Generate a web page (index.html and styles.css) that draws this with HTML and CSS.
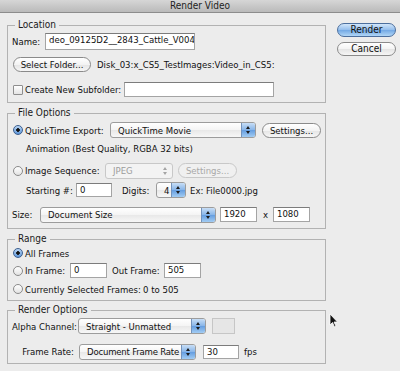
FILE: index.html
```html
<!DOCTYPE html>
<html lang="en">
  <head>
    <meta charset="UTF-8" />
    <meta name="viewport" content="width=device-width, initial-scale=1.0" />
    <title>Render Video</title>
    <link rel="stylesheet" href="styles.css">
  </head>
  <body>
    <div class="titlebar">Render Video</div>
    <div class="dialog">
      <div class="main">
        <fieldset class="group location">
          <legend>Location</legend>
          <div class="row row-name">
            <span class="lbl name-lbl">Name:</span>
            <div class="text name-input">deo_09125D2__2843_Cattle_V004<i class="caret"></i></div>
          </div>
          <div class="row row-folder">
            <div class="btn folder-btn">Select Folder...</div>
            <span class="path">Disk_03:x_CS5_TestImages:Video_in_CS5:</span>
          </div>
          <div class="row row-sub">
            <span class="check"></span>
            <span class="lbl sub-lbl">Create New Subfolder:</span>
            <div class="text sub-input"></div>
          </div>
        </fieldset>

        <fieldset class="group file-options">
          <legend>File Options</legend>
          <div class="row row-qt">
            <span class="radio on"></span>
            <span class="lbl qt-lbl">QuickTime Export:</span>
            <div class="popup qt-popup"><span>QuickTime Movie</span><i class="arrows"></i></div>
            <div class="btn settings-btn">Settings...</div>
          </div>
          <div class="row row-anim">
            <span class="lbl">Animation (Best Quality, RGBA 32 bits)</span>
          </div>
          <div class="row row-seq">
            <span class="radio"></span>
            <span class="lbl seq-lbl">Image Sequence:</span>
            <div class="popup disabled jpeg-popup"><span>JPEG</span><i class="arrows"></i></div>
            <div class="btn disabled seq-settings">Settings...</div>
          </div>
          <div class="row row-start">
            <span class="lbl start-lbl">Starting #:</span>
            <div class="text start-input">0</div>
            <span class="lbl digits-lbl">Digits:</span>
            <div class="popup digits-popup"><span>4</span><i class="arrows"></i></div>
            <span class="lbl ex-lbl">Ex: File0000.jpg</span>
          </div>
          <div class="row row-size">
            <span class="lbl size-lbl">Size:</span>
            <div class="popup size-popup"><span>Document Size</span><i class="arrows"></i></div>
            <div class="text dim-input first">1920</div>
            <span class="lbl times">x</span>
            <div class="text dim-input">1080</div>
          </div>
        </fieldset>

        <fieldset class="group range">
          <legend>Range</legend>
          <div class="row row-all">
            <span class="radio on"></span>
            <span class="lbl">All Frames</span>
          </div>
          <div class="row row-in">
            <span class="radio"></span>
            <span class="lbl in-lbl">In Frame:</span>
            <div class="text frame-input">0</div>
            <span class="lbl out-lbl">Out Frame:</span>
            <div class="text frame-input">505</div>
          </div>
          <div class="row row-cur">
            <span class="radio"></span>
            <span class="lbl cur-lbl">Currently Selected Frames:</span>
            <span class="lbl">0 to 505</span>
          </div>
        </fieldset>

        <fieldset class="group render-options">
          <legend>Render Options</legend>
          <div class="row row-alpha">
            <span class="lbl opt-lbl">Alpha Channel:</span>
            <div class="popup alpha-popup"><span>Straight - Unmatted</span><i class="arrows"></i></div>
            <span class="swatch"></span>
          </div>
          <div class="row row-rate">
            <span class="lbl opt-lbl">Frame Rate:</span>
            <div class="popup rate-popup"><span>Document Frame Rate</span><i class="arrows"></i></div>
            <div class="text fps-input">30</div>
            <span class="lbl fps-lbl">fps</span>
          </div>
        </fieldset>
      </div>

      <div class="side">
        <div class="btn default">Render</div>
        <div class="btn">Cancel</div>
      </div>
    </div>
    <svg class="cursor" width="10" height="15" viewBox="0 0 10 15">
      <path d="M1 1 L1 12 L3.5 9.5 L5.5 14 L7 13.3 L5 9 L8.5 9 Z" fill="#111" stroke="#fff" stroke-width="0.8" />
    </svg>
  </body>
</html>
```

FILE: styles.css
```css
body {
  margin: 0;
  width: 400px;
  height: 371px;
  overflow: hidden;
  background: #ececec;
  font-family: "DejaVu Sans Condensed", "DejaVu Sans", sans-serif;
  font-stretch: condensed;
  font-size: 9.5px;
  color: #111;
  position: relative;
}

.titlebar {
  height: 12px;
  line-height: 12px;
  text-align: center;
  font-size: 10px;
  color: #1e1e1e;
  background: linear-gradient(#d6d6d6, #bababa);
  border-bottom: 1px solid #8c8c8c;
  overflow: hidden;
}

.dialog {
  display: flex;
  padding-left: 7px;
}

.main {
  width: 319px;
  display: flex;
  flex-direction: column;
}

.side {
  display: flex;
  flex-direction: column;
  gap: 5px;
  margin-left: 11px;
  margin-top: 10px;
}

.group {
  box-sizing: border-box;
  margin: 0;
  padding: 0 0 0 4px;
  border: 1px solid #b2b2b2;
  min-width: 0;
}

.group legend {
  margin-left: 3px;
  padding: 0 3px;
  line-height: 12px;
  font-size: 10px;
  color: #1a1a1a;
}

.location {
  margin-top: 6px;
  height: 84px;
}

.file-options {
  margin-top: 4px;
  height: 122px;
}

.range {
  margin-top: 4px;
  height: 68px;
}

.render-options {
  margin-top: 3px;
  height: 60px;
}

.row {
  display: flex;
  align-items: center;
  white-space: nowrap;
}

.lbl {
  flex: none;
}

/* location */
.row-name {
  margin-top: 2px;
  height: 17px;
}

.name-lbl {
  width: 33px;
}

.name-input {
  width: 150px;
  height: 17px;
  line-height: 15px;
  padding-left: 2px;
}

.caret {
  display: inline-block;
  width: 1px;
  height: 11px;
  margin-left: 1px;
  vertical-align: -2px;
  background: #111;
}

.row-folder {
  margin-top: 7px;
  height: 15px;
}

.folder-btn {
  margin-left: 1px;
  width: 78px;
}

.path {
  margin-left: 6px;
}

.row-sub {
  margin-top: 10px;
  height: 15px;
}

.check {
  flex: none;
  box-sizing: border-box;
  width: 10px;
  height: 10px;
  margin: 0 2px 0 1px;
  border: 1px solid #8e8e8e;
  border-radius: 1px;
  background: linear-gradient(#fff, #e4e4e4);
}

.sub-lbl {
  width: 99px;
}

.sub-input {
  width: 150px;
  height: 15px;
}

/* file options */
.row-qt {
  margin-top: 3px;
  height: 16px;
}

.qt-lbl {
  width: 85px;
}

.qt-popup {
  width: 146px;
}

.settings-btn {
  margin-left: 6px;
  width: 59px;
}

.row-anim {
  margin-top: 3px;
  height: 14px;
  padding-left: 14px;
}

.row-seq {
  margin-top: 8px;
  height: 15px;
}

.seq-lbl {
  width: 80px;
}

.jpeg-popup {
  width: 68px;
  height: 15px;
}

.seq-settings {
  margin-left: 5px;
  width: 59px;
}

.row-start {
  margin-top: 5px;
  height: 14px;
  padding-left: 14px;
}

.start-lbl {
  width: 50px;
}

.start-input {
  width: 36px;
  height: 14px;
}

.digits-lbl {
  margin-left: 10px;
  width: 34px;
}

.digits-popup {
  width: 30px;
  height: 14px;
}

.ex-lbl {
  margin-left: 4px;
}

.row-size {
  margin-top: 10px;
  height: 15px;
}

.size-lbl {
  width: 28px;
}

.size-popup {
  width: 176px;
  height: 15px;
}

.dim-input {
  width: 37px;
  height: 15px;
}

.dim-input.first {
  margin-left: 4px;
}

.times {
  margin-left: 6px;
  width: 10px;
}

/* range */
.row-all {
  margin-top: 2px;
  height: 12px;
}

.row-in {
  margin-top: 4px;
  height: 15px;
}

.in-lbl {
  width: 45px;
}

.frame-input {
  width: 37px;
  height: 15px;
}

.out-lbl {
  margin-left: 5px;
  width: 52px;
}

.row-cur {
  margin-top: 4px;
  height: 14px;
}

.cur-lbl {
  width: 118px;
}

/* render options */
.row-alpha {
  margin-top: 2px;
  height: 16px;
}

.opt-lbl {
  width: 62px;
  padding-right: 4px;
  text-align: right;
}

.alpha-popup {
  width: 128px;
}

.swatch {
  flex: none;
  box-sizing: border-box;
  margin-left: 6px;
  width: 23px;
  height: 16px;
  border: 1px solid #c6c6c6;
  background: #e6e6e6;
}

.row-rate {
  margin-top: 10px;
  height: 15px;
}

.rate-popup {
  margin-left: 1px;
  width: 117px;
  height: 15px;
}

.rate-popup span {
  padding-left: 4px;
  letter-spacing: -0.2px;
}

.fps-input {
  margin-left: 7px;
  width: 36px;
  height: 14px;
}

.fps-lbl {
  margin-left: 5px;
}

/* controls */
.text {
  flex: none;
  box-sizing: border-box;
  padding: 0 3px;
  border: 1px solid #a4a4a4;
  border-top-color: #7c7c7c;
  background: #fff;
  line-height: 12px;
  overflow: hidden;
  white-space: nowrap;
}

.btn {
  flex: none;
  box-sizing: border-box;
  height: 15px;
  border: 1px solid #8a8a8a;
  border-radius: 8px;
  background: linear-gradient(#ffffff, #f3f3f3 50%, #e4e4e4 51%, #f6f6f6);
  text-align: center;
  line-height: 13px;
}

.btn.disabled {
  color: #a8a8a8;
  border-color: #c8c8c8;
  background: #f0f0f0;
}

.side .btn {
  width: 59px;
  height: 14px;
  line-height: 12px;
  font-size: 10px;
}

.btn.default {
  border-color: #4c6f9e;
  background: linear-gradient(#d2e6fa, #93bdec 50%, #72a8e4 51%, #b0d6f6);
}

.popup {
  flex: none;
  box-sizing: border-box;
  height: 16px;
  display: flex;
  border: 1px solid #9c9c9c;
  border-radius: 3px;
  background: linear-gradient(#ffffff, #f4f4f4 50%, #e8e8e8 51%, #f7f7f7);
  overflow: hidden;
}

.popup span {
  flex: 1;
  padding-left: 7px;
  display: flex;
  align-items: center;
  overflow: hidden;
}

.popup .arrows {
  flex: none;
  width: 13px;
  border-left: 1px solid #7393bd;
  background: linear-gradient(#c8def6, #86b4e8 50%, #649de0 51%, #a2ccf3);
  position: relative;
}

.popup .arrows::before,
.popup .arrows::after {
  content: "";
  position: absolute;
  left: 4px;
  border-left: 2.5px solid transparent;
  border-right: 2.5px solid transparent;
}

.popup .arrows::before {
  top: 3px;
  border-bottom: 3px solid #1a1a1a;
}

.popup .arrows::after {
  bottom: 3px;
  border-top: 3px solid #1a1a1a;
}

.popup.disabled {
  border-color: #c8c8c8;
  background: #f3f3f3;
}

.popup.disabled span {
  color: #9c9c9c;
}

.popup.disabled .arrows {
  border-left: none;
  background: transparent;
}

.popup.disabled .arrows::before {
  border-bottom-color: #a4a4a4;
}

.popup.disabled .arrows::after {
  border-top-color: #a4a4a4;
}

.radio {
  flex: none;
  box-sizing: border-box;
  width: 10px;
  height: 10px;
  margin: 0 2px 0 1px;
  border: 1px solid #8a8a8a;
  border-radius: 50%;
  background: linear-gradient(#ffffff, #e2e2e2);
}

.radio.on {
  border-color: #3d5f8e;
  background: radial-gradient(circle, #111 0 1.5px, transparent 2.1px), linear-gradient(#b8d4f3, #5e96d9);
}

.cursor {
  position: absolute;
  left: 329px;
  top: 313px;
}
```
